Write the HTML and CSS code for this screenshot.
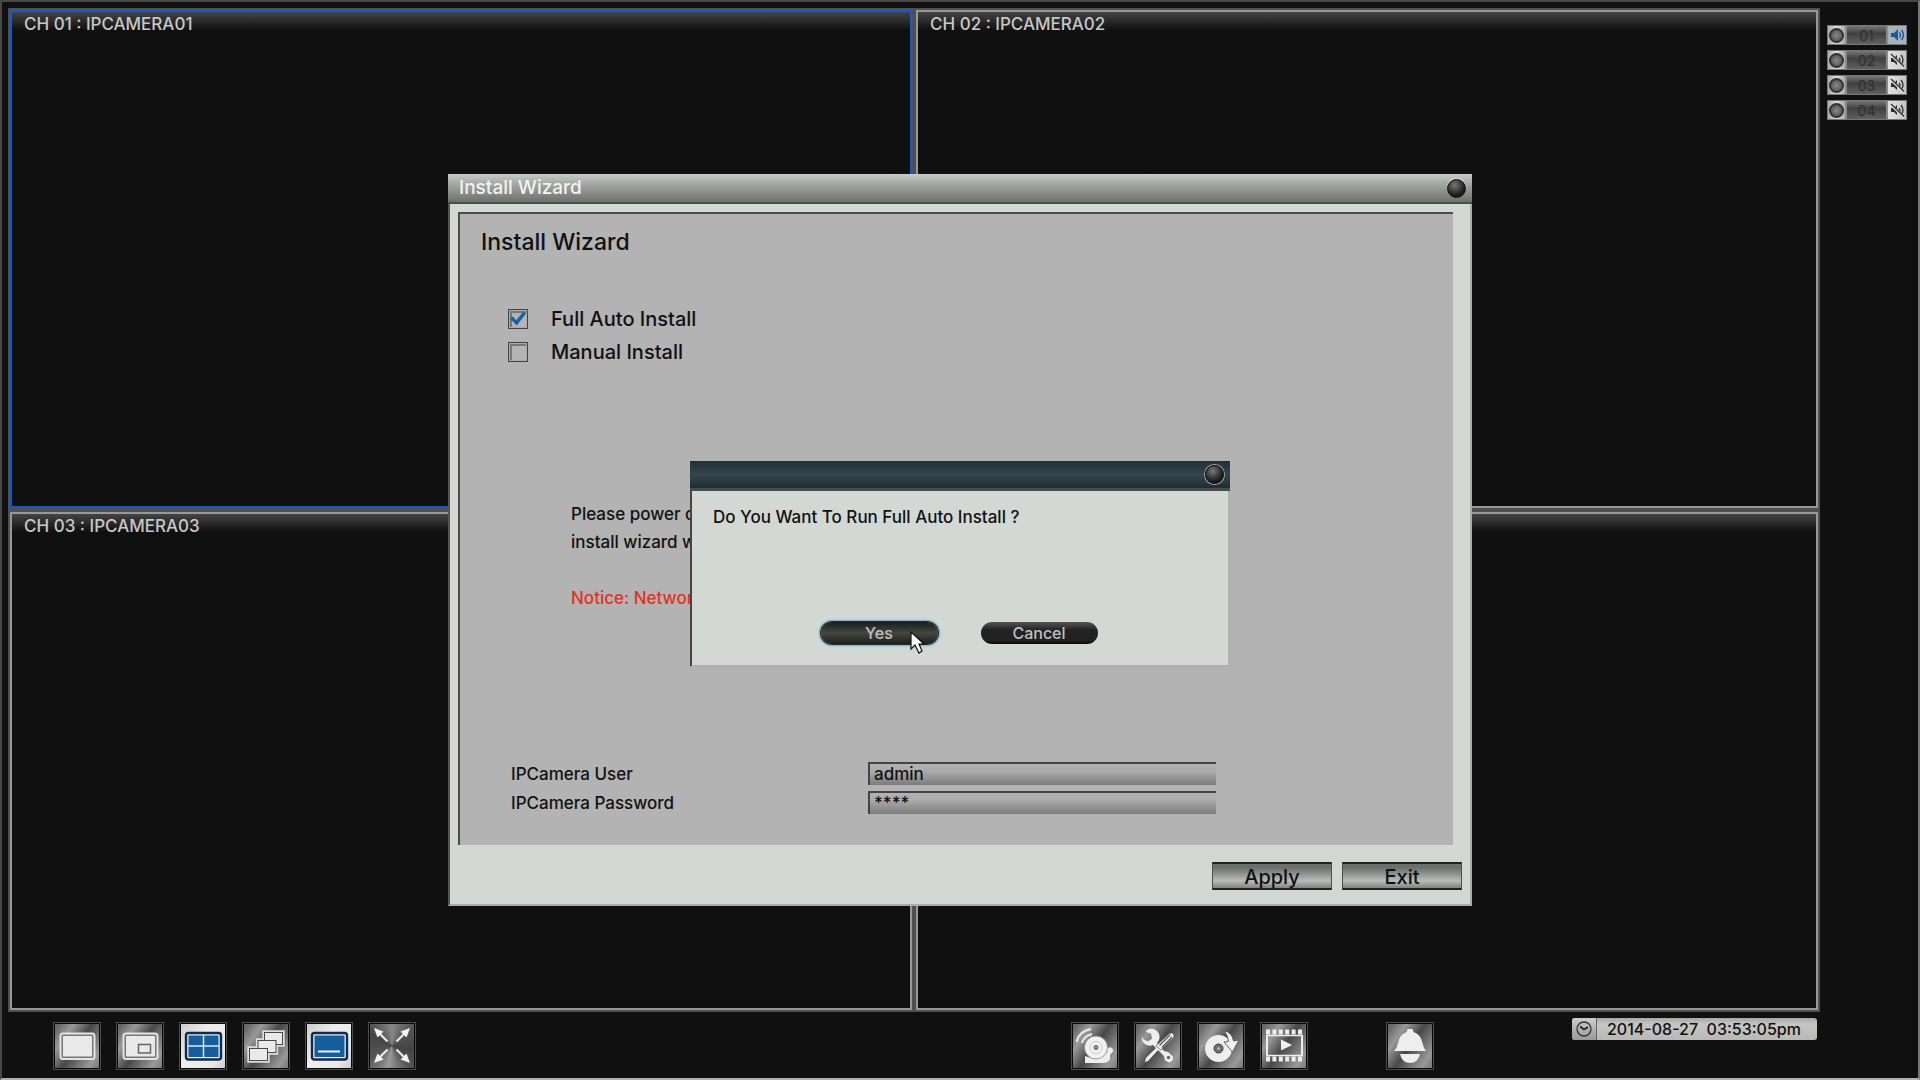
FILE: index.html
```html
<!DOCTYPE html>
<html lang="en">
<head>
<meta charset="utf-8">
<title>Install Wizard</title>
<link rel="stylesheet" href="styles.css">
</head>
<body>
<svg class="defs" aria-hidden="true">
  <defs>
    <symbol id="speaker" viewBox="0 0 16 16">
      <path d="M2 6h3l4-4v12l-4-4H2z" fill="currentColor"/>
      <path d="M10.500 5.500q2 2.500 0 5M12.500 3q4 5 0 10" fill="none" stroke="currentColor" stroke-width="1.400"/>
    </symbol>
    <symbol id="muted" viewBox="0 0 16 16">
      <path d="M2 6h3l3-3v10l-3-3H2z" fill="currentColor"/>
      <path d="M10 6q2 2.500 0 5M12 3q4 5 0 10" fill="none" stroke="currentColor" stroke-width="1.300"/>
      <path d="M1 2l14 13" stroke="#ddd" stroke-width="2.500"/>
      <path d="M2 2l13 12.500" stroke="currentColor" stroke-width="1.200"/>
    </symbol>
  </defs>
</svg>

<div class="screen">
  <main class="views">
    <section class="view view-active"><h2 class="view-name">CH 01 : IPCAMERA01</h2></section>
    <section class="view"><h2 class="view-name">CH 02 : IPCAMERA02</h2></section>
    <section class="view"><h2 class="view-name">CH 03 : IPCAMERA03</h2></section>
    <section class="view"></section>
  </main>

  <aside class="channels">
    <div class="channel"><span class="rec"><i class="dot"></i></span><span class="num">01</span><button class="audio audio-on" aria-label="Audio 01"><svg><use href="#speaker"/></svg></button></div>
    <div class="channel"><span class="rec"><i class="dot"></i></span><span class="num">02</span><button class="audio" aria-label="Audio 02"><svg><use href="#muted"/></svg></button></div>
    <div class="channel"><span class="rec"><i class="dot"></i></span><span class="num">03</span><button class="audio" aria-label="Audio 03"><svg><use href="#muted"/></svg></button></div>
    <div class="channel"><span class="rec"><i class="dot"></i></span><span class="num">04</span><button class="audio" aria-label="Audio 04"><svg><use href="#muted"/></svg></button></div>
  </aside>

  <nav class="toolbar">
    <div class="tools tools-layout">
      <button class="tool" aria-label="Full screen view"><svg viewBox="2 2 44 44">
        <rect x="7.500" y="11.500" width="34" height="25.500" rx="2.500" fill="#777" stroke="#e4e4e4" stroke-width="2"/><rect x="10" y="14" width="29" height="20.500" fill="#e9e9e9"/></svg></button>
      <button class="tool" aria-label="Picture in picture"><svg viewBox="2 2 44 44">
        <rect x="7.500" y="11.500" width="34" height="25.500" rx="2.500" fill="#777" stroke="#e4e4e4" stroke-width="2"/><rect x="10" y="14" width="29" height="20.500" fill="#e9e9e9"/><rect x="22.500" y="22.500" width="12" height="8.500" fill="#e9e9e9" stroke="#666" stroke-width="1.500"/></svg></button>
      <button class="tool tool-on" aria-label="Quad view"><svg viewBox="2 2 44 44">
        <rect x="7" y="11" width="35" height="26.500" rx="2.500" fill="#e6edf5" stroke="#12294a" stroke-width="2.400"/><rect x="9.500" y="13.500" width="30" height="21.500" fill="#145e9e"/><path d="M24.500 13v22M9 24h31" stroke="#dce8f2" stroke-width="1.500"/></svg></button>
      <button class="tool" aria-label="Sequence"><svg viewBox="2 2 44 44" fill="#eaeaea" stroke="#4a4a4a">
        <path d="M21.500 9.500h20v14h-20zM15 17.500h20v14H15zM6.500 25.500h20v14h-20z" stroke="#ddd" stroke-width="2.400"/>
        <rect x="22.500" y="10.500" width="18" height="12"/><rect x="16" y="18.500" width="18" height="12"/><rect x="7.500" y="26.500" width="18" height="12"/></svg></button>
      <button class="tool tool-on" aria-label="Status bar"><svg viewBox="2 2 44 44">
        <rect x="7" y="11" width="35" height="26.500" rx="2.500" fill="#e6edf5" stroke="#12294a" stroke-width="2.400"/><rect x="9.500" y="13.500" width="30" height="21.500" fill="#145e9e"/><path d="M13 29.500h22" stroke="#e6eef6" stroke-width="2"/></svg></button>
      <button class="tool tool-expand" aria-label="Expand"><svg viewBox="2 2 44 44">
        <path d="M10 10l9.500 9.500M38 10l-9.500 9.500M10 37l9.500-9.500M38 37l-9.500-9.500" stroke="#e8e8e8" stroke-width="2.200"/><path d="M6 6l9.500 3.500-6 6zM42 6l-9.500 3.500 6 6zM6 41l3.500-9.500 6 6zM42 41l-3.500-9.500-6 6z" fill="#f4f4f4"/></svg></button>
    </div>
    <div class="tools tools-menu">
      <button class="tool" aria-label="Alarm"><svg viewBox="2 2 44 44">
        <path d="M5.500 20Q8 9 20 7M11 21q2-7 10-9" fill="none" stroke="#e2e2e2" stroke-width="2.400"/>
        <path d="M14 34l6 2q8 3 14-4l2.500-2a3 3 0 1 1 4 1l-1.500 2v4q-2 4-6 4H14z" fill="#eee"/>
        <circle cx="25" cy="25.500" r="11.500" fill="#f1f1f1" stroke="#888" stroke-width=".8"/><circle cx="25" cy="25.500" r="6" fill="none" stroke="#ccc"/><circle cx="25" cy="25.500" r="2" fill="#999" stroke="#555"/></svg></button>
      <button class="tool" aria-label="Setup"><svg viewBox="2 2 44 44">
        <path d="M12 10l5 1.500 1 5-4 3-4.500-2-1.500-3a8 8 0 0 0 11 8.500L30 34q0 5 5 6.500 4.500-1 4-6L34 30l-4-1-7-8A8 8 0 0 0 12 9z" fill="#eee"/><circle cx="34.500" cy="35.500" r="1.700" fill="#666"/>
        <path d="M25 27L14 39l-3 1 1-4 11-11z" fill="#f0f0f0"/><path d="M22 24l13-12q5-3 5 3L27 28z" fill="#eee" stroke="#555" stroke-width=".7"/><path d="M25.500 23.500L36 13M28 25.500L38 15" stroke="#555" stroke-width="1.200"/></svg></button>
      <button class="tool" aria-label="Backup"><svg viewBox="2 2 44 44">
        <circle cx="21.500" cy="26.500" r="13.500" fill="#eee"/><circle cx="21.500" cy="26.500" r="4.500" fill="#777" stroke="#333"/><circle cx="21.500" cy="26.500" r="2" fill="#bbb" stroke="#444" stroke-width=".7"/>
        <path d="M27 9q8 1 9.500 10l5.500-1-6.500 12L27 20l4.500-.5Q31 13 27 9z" fill="#f2f2f2" stroke="#555" stroke-width=".9"/></svg></button>
      <button class="tool" aria-label="Playback"><svg viewBox="2 2 44 44">
        <path d="M6 10h36M6 37h36" stroke="#eee" stroke-width="5" stroke-dasharray="4 2.400"/><path d="M6 13.500h37M6 33.500h37" stroke="#eee" stroke-width="1.600"/><path d="M7 13v21M42 13v21" stroke="#eee" stroke-width="2"/><path d="M21 17.500l11 5.500-11 5.500z" fill="#eee"/></svg></button>
    </div>
    <div class="tools tools-alert">
      <button class="tool" aria-label="Event log"><svg viewBox="2 2 44 44">
        <path d="M20.500 10l1-3h5l1 3q7 2 9 11 1 5 3.500 8H8q3-3 4-8 2-9 8.500-11z" fill="#eee"/><path d="M14 32h20q-2 9-10 9t-10-9z" fill="#eee"/></svg></button>
    </div>
    <div class="clock">
      <span class="clock-icon"><svg viewBox="0 0 18 18"><circle cx="9" cy="9" r="7" fill="none" stroke="#333" stroke-width="1.300"/><path d="M5 6.500L9 9.500 13 7" fill="none" stroke="#222" stroke-width="1.800"/></svg></span>
      <time class="clock-time">2014-08-27&nbsp; 03:53:05pm</time>
    </div>
  </nav>
</div>

<div class="overlay">
  <div class="dialog" role="dialog" aria-label="Install Wizard">
    <header class="dialog-bar"><span>Install Wizard</span><button class="close" aria-label="Close"></button></header>
    <form class="dialog-body">
      <div class="panel">
        <h1 class="heading">Install Wizard</h1>
        <div class="options">
          <label class="option"><input class="tick" type="checkbox" checked>Full Auto Install</label>
          <label class="option"><input class="tick" type="checkbox">Manual Install</label>
        </div>
        <div class="message">
          <p>Please power o<br>install wizard w</p>
          <p class="notice">Notice: Network</p>
        </div>
        <div class="fields">
          <label for="user">IPCamera User</label><input class="field" id="user" type="text" value="admin">
          <label for="pass">IPCamera Password</label><input class="field" id="pass" type="text" value="****">
        </div>
      </div>
      <footer class="actions">
        <button class="action" type="button">Apply</button>
        <button class="action" type="button">Exit</button>
      </footer>
    </form>

    <div class="popup" role="alertdialog" aria-label="Confirm">
      <header class="popup-bar"><button class="close close-ring" aria-label="Close"></button></header>
      <div class="popup-body">
        <p class="question">Do You Want To Run Full Auto Install ?</p>
        <div class="choices">
          <button class="pill pill-focus">Yes<svg class="pointer" viewBox="0 0 15 24"><path d="M1 1v17l4-4 4 8 3-2-3-7h5z" fill="#fff" stroke="#111" stroke-width="1.200"/></svg></button>
          <button class="pill">Cancel</button>
        </div>
      </div>
    </div>
  </div>
</div>
</body>
</html>
```
FILE: styles.css
```css
* { box-sizing: border-box; }

body {
  margin: 0;
  background: #101010;
  color: #111;
  font: 500 17px/28px Inter, "Liberation Sans", sans-serif;
}

h1, h2, p { margin: 0; font-weight: 500; }
button, input { margin: 0; padding: 0; font: inherit; }
svg { display: block; }
.defs { position: absolute; width: 0; height: 0; }

.screen {
  display: grid;
  grid-template: 1fr 66px / 1fr 98px;
  min-height: 100vh;
  padding: 6px 0 0 6px;
  border: 2px solid #474747;
  border-right-color: #777;
  border-bottom-color: #b0b0b0;
}

/* camera grid */
.views { display: grid; grid-template: 1fr 1fr / 1fr 1fr; }
.view {
  border: 2px solid #505050;
  outline: 2px solid #989898;
  outline-offset: -4px;
  padding: 2px;
}
.view::before {
  content: "";
  display: block;
  height: 18px;
  margin: 0 0 -18px;
  background: linear-gradient(#444, #101010);
}
.view-active { outline-color: #1a56cc; }
.view-name {
  position: relative;
  padding-left: 12px;
  color: #c8c8c8;
  font-size: 17px;
  line-height: 25px;
}

/* channel status */
.channels { padding: 17px 11px 0 7px; display: flex; flex-direction: column; gap: 5px; }
.channel { display: flex; height: 20px; border: 1px solid #777; }
.rec { width: 17px; display: grid; place-items: center; background: linear-gradient(90deg, #aaa, #ddd, #aaa); }
.dot { width: 15px; height: 15px; border: 2px solid #333; border-radius: 50%; background: radial-gradient(#888, #4a4a4a); }
.num {
  flex: 1;
  border: solid #8a8a8a;
  border-width: 0 2px;
  background: linear-gradient(#777, #404040 40%, #606060);
  color: #303030;
  font-size: 14px;
  font-weight: 400;
  line-height: 19px;
  text-align: center;
}
.audio { width: 18px; border: 0; padding: 1px; background: linear-gradient(90deg, #e2e2e2, #c4c4c4); color: #2c2c2c; }
.audio svg { width: 16px; height: 16px; }
.audio-on { background: #a9b2ba; color: #145c9e; }

/* bottom bar */
.toolbar {
  grid-column: 1 / -1;
  display: grid;
  grid-template-columns: auto 655fr auto 78px auto 138fr auto;
  align-items: center;
  padding: 1px 101px 0 45px;
}
.tools { display: flex; gap: 15px; }
.tools-menu { grid-column: 3; }
.tools-alert { grid-column: 5; }
.tool {
  width: 48px;
  height: 48px;
  padding: 1px;
  border: 1px solid #4c4c4c;
  background: #080808;
}
.tool svg { width: 44px; height: 44px; background: linear-gradient(125deg, #666 5%, #999 25%, #484848 50%, #999 85%, #777); }
.tool-on svg { background: linear-gradient(125deg, #ccc, #eee 40%, #e8e8e8 80%, #ccc); }
.tool-expand svg { background: conic-gradient(#888, #555 45deg, #444 100deg, #555 140deg, #999 190deg, #555 240deg, #444 300deg, #888); }

.clock {
  grid-column: 7;
  align-self: start;
  display: flex;
  width: 245px;
  height: 22px;
  margin-top: 5px;
  border-radius: 3px;
  overflow: hidden;
  background: linear-gradient(#a8a8a8, #c6c6c4 30%, #b8b8b6);
}
.clock-icon { width: 25px; padding: 2px 3px; border-right: 1px solid #666; background: linear-gradient(#ccc, #999); }
.clock-icon svg { width: 18px; height: 18px; }
.clock-time { flex: 1; padding-left: 10px; font-size: 16px; line-height: 23px; }

/* install wizard */
.overlay { position: fixed; inset: 0; display: grid; place-items: center; }
.dialog { position: relative; width: min(1024px, 100%); background: #d3d8d4; }
.dialog-bar {
  display: flex;
  justify-content: space-between;
  align-items: center;
  height: 30px;
  padding: 0 6px 0 11px;
  border-bottom: 2px solid #4b4e4b;
  background: linear-gradient(#c8ccc8, #a4a8a4 35%, #6e706d);
  color: #f2f2f2;
  font-size: 19px;
}
.close {
  width: 19px;
  height: 19px;
  border: 1px solid #111;
  border-radius: 50%;
  background: radial-gradient(circle at 40% 30%, #777, #222 60%, #080808);
  box-shadow: 0 -1px 1px #e8e8e8;
}
.dialog-body { padding: 8px 17px 14px 8px; border: solid #a8adaa; border-width: 0 2px 2px; border-left-color: #555; }
.panel { padding: 14px 0 31px 21px; border: solid #484c4a; border-width: 2px 0 0 2px; background: #b3b3b3; }
.heading { font-size: 23px; }
.options { margin: 46px 0 0 27px; }
.option { display: flex; align-items: center; gap: 23px; height: 33px; font-size: 20px; }
.tick {
  appearance: none;
  display: grid;
  place-items: center;
  width: 20px;
  height: 20px;
  border: 1px solid #444;
  box-shadow: inset 0 0 0 1px #aaa, inset 2px 2px 0 1px #777;
  background: #b4b4b4;
}
.tick:checked::before {
  content: "";
  width: 16px;
  height: 14px;
  background: #1763a6;
  clip-path: polygon(0 50%, 19% 36%, 38% 62%, 84% 0, 100% 14%, 42% 100%);
}
.message { margin: 132px 0 0 90px; }
.notice { margin-top: 28px; color: #e03324; }
.fields {
  display: grid;
  grid-template-columns: 357px 348px;
  row-gap: 6px;
  margin: 150px 0 0 30px;
  line-height: 23px;
}
.fields label { height: 23px; padding-top: 1px; }
.field {
  height: 23px;
  padding: 0 4px;
  border: solid #444;
  border-width: 2px 0 0 2px;
  background: linear-gradient(#b2b2b2, #aaa 35%, #7c7c7c);
  color: #111;
}
.actions { display: flex; justify-content: flex-end; gap: 10px; margin: 17px -9px 0 0; }
.action {
  width: 120px;
  height: 28px;
  padding-top: 2px;
  border: 1px solid #4a4f4c;
  border-width: 2px 1px;
  border-top-color: #222;
  border-bottom-color: #222;
  background: linear-gradient(#6b706c 15%, #9a9f9b 50%, #b8bdb9 70%, #7f8480);
  color: #111;
  font-size: 20px;
  line-height: 22px;
}

/* confirmation popup */
.popup { position: absolute; top: 287px; left: calc(50% - 270px); width: 540px; background: #d3d8d4; }
.popup-bar {
  display: flex;
  justify-content: flex-end;
  align-items: center;
  height: 30px;
  padding-right: 6px;
  border-bottom: 3px solid #454d50;
  background: linear-gradient(#212f35, #35444e 50%, #202d32);
}
.close-ring { box-shadow: 0 0 0 1px #aaa; }
.popup-body { padding: 12px 0 21px 21px; border: solid #444; border-width: 0 2px 2px; border-right-color: #b0b4b1; border-bottom-color: #b0b0b0; }
.choices { display: flex; gap: 43px; justify-content: center; margin: 91px 23px 0 0; }
.pill {
  position: relative;
  width: 117px;
  height: 22px;
  border: 0;
  border-radius: 11px;
  background: linear-gradient(#555 0, #242424 35%, #202020 85%, #080808);
  color: #c0c0c0;
  font-size: 16px;
  line-height: 22px;
}
.pill-focus { background: linear-gradient(#1a1f1f, #464641 50%, #1c1f1c); box-shadow: 0 0 0 1px #16303c, 0 0 2px 2px #79a9bd; }
.pointer { position: absolute; left: 89px; top: 9px; width: 15px; height: 24px; }
```
